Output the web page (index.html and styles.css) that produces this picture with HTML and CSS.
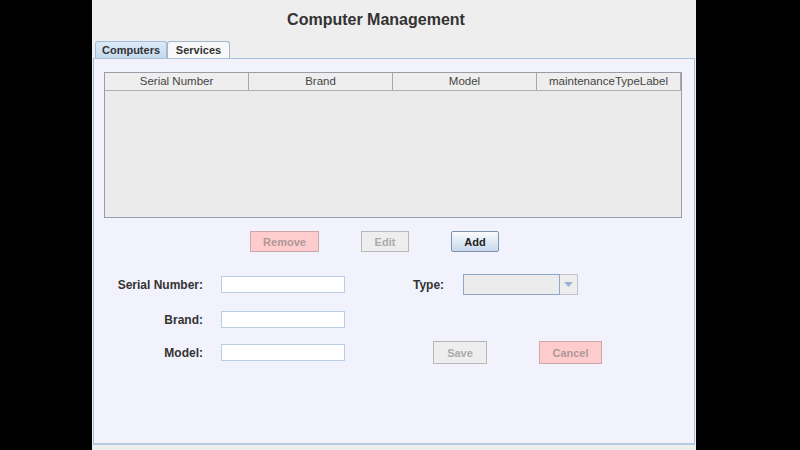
FILE: index.html
```html
<!DOCTYPE html>
<html>
<head>
<meta charset="utf-8">
<link rel="stylesheet" href="styles.css">
</head>
<body>
<div class="window">
  <h1 class="title">Computer Management</h1>
  <div class="tabs">
    <div class="tab tab-active">Computers</div>
    <div class="tab">Services</div>
  </div>
  <div class="panel">
    <div class="table">
      <div class="thead">
        <div class="th">Serial Number</div>
        <div class="th">Brand</div>
        <div class="th">Model</div>
        <div class="th">maintenanceTypeLabel</div>
      </div>
    </div>
    <div class="actions">
      <button class="btn btn-red btn-remove">Remove</button>
      <button class="btn btn-grey btn-edit">Edit</button>
      <button class="btn btn-blue btn-add">Add</button>
    </div>
    <div class="form">
      <div class="row row1">
        <label class="lbl">Serial Number:</label>
        <div class="field"></div>
        <label class="lbl lbl-type">Type:</label>
        <div class="combo"><div class="combo-val"></div><div class="combo-arrow"><svg width="9" height="5" viewBox="0 0 9 5"><path d="M0 0 H9 L4.5 5 Z" fill="#9bb3d3"/></svg></div></div>
      </div>
      <div class="row row2">
        <label class="lbl">Brand:</label>
        <div class="field"></div>
      </div>
      <div class="row row3">
        <label class="lbl">Model:</label>
        <div class="field"></div>
        <button class="btn btn-grey btn-save">Save</button>
        <button class="btn btn-red btn-cancel">Cancel</button>
      </div>
    </div>
  </div>
</div>
</body>
</html>
```
FILE: styles.css
```css
html, body {
  margin: 0;
  padding: 0;
  background: #000;
  width: 800px;
  height: 450px;
  overflow: hidden;
  font-family: "Liberation Sans", Arial, sans-serif;
}
.window {
  margin-left: 92px;
  width: 604px;
  height: 450px;
  background: #eeeeee;
  display: flex;
  flex-direction: column;
}
.title {
  margin: 0;
  height: 41px;
  padding: 10px 36px 0 0;
  box-sizing: border-box;
  text-align: center;
  font-size: 16px;
  font-weight: bold;
  color: #333;
  line-height: 19px;
}
.tabs {
  display: flex;
  padding-left: 3px;
  height: 17px;
}
.tab {
  box-sizing: border-box;
  height: 17px;
  padding: 0;
  border: 1px solid #a3b8cc;
  border-bottom: none;
  border-radius: 3px 3px 0 0;
  background: #f8f8f8;
  font-size: 11px;
  font-weight: bold;
  color: #333;
  line-height: 16px;
  width: 63px;
  text-align: center;
}
.tab-active {
  width: 72px;
  background: linear-gradient(#ddeaf7, #c4d9ee);
  border-color: #a3bbd6;
}
.panel {
  box-sizing: border-box;
  margin-left: 1px;
  width: 602px;
  height: 387px;
  border: 1px solid #a8c0db;
  border-bottom: 2px solid #b4c8de;
  background: #f2f2fc;
  padding: 13px 13px 0 10px;
}
.table {
  box-sizing: border-box;
  width: 578px;
  height: 146px;
  border: 1px solid #9a9ca6;
  background: #ebebeb;
}
.thead {
  display: flex;
  height: 17px;
  border-bottom: 1px solid #b0b0b0;
  background: #eeeeee;
}
.th {
  box-sizing: border-box;
  width: 144px;
  border-right: 1px solid #a8a8a8;
  font-size: 11.5px;
  color: #444;
  text-align: center;
  line-height: 17px;
}
.actions {
  display: flex;
  height: 21px;
  margin-top: 13px;
}
.btn {
  box-sizing: border-box;
  height: 21px;
  padding: 0;
  font-family: "Liberation Sans", Arial, sans-serif;
  font-size: 11px;
  font-weight: bold;
  border-radius: 0;
  border: 1px solid #b8b8b8;
}
.btn-red {
  background: #fecccc;
  border-color: #c9a9a9;
  color: #b09898;
}
.btn-grey {
  background: #eeeeee;
  border-color: #b8b8b8;
  color: #aaaaaa;
}
.btn-blue {
  background: linear-gradient(#fbfcfe, #dbe6f3 60%, #c9d9ec);
  border-color: #7e93ae;
  color: #222;
  border-radius: 2px;
}
.btn-remove { margin-left: 146px; width: 69px; }
.btn-edit { margin-left: 42px; width: 48px; }
.btn-add { margin-left: 42px; width: 48px; }
.form {
  display: flex;
  flex-direction: column;
  margin-top: 22px;
}
.row {
  display: flex;
  align-items: center;
}
.row1 { height: 21px; }
.row2 { height: 17px; margin-top: 16px; }
.row3 { height: 23px; margin-top: 13px; }
.lbl {
  box-sizing: border-box;
  width: 99px;
  text-align: right;
  font-size: 12px;
  font-weight: bold;
  color: #333;
}
.field {
  box-sizing: border-box;
  margin-left: 18px;
  width: 124px;
  height: 17px;
  background: #fff;
  border: 1px solid #b8cfe6;
}
.lbl-type {
  margin-left: 68px;
  width: 31px;
  text-align: left;
}
.combo {
  box-sizing: border-box;
  margin-left: 19px;
  width: 115px;
  height: 21px;
  display: flex;
  border: 1px solid #c0c4cc;
  background: #eeeeee;
}
.combo-val {
  flex: 1;
  border: 1px solid #8fa7c6;
  margin: -1px 0 -1px -1px;
  background: #ececec;
}
.combo-arrow {
  width: 17px;
  display: flex;
  align-items: center;
  justify-content: center;
  background: #eeeeee;
}
.btn-save {
  height: 23px;
  margin-left: 88px;
  width: 54px;
}
.btn-cancel {
  height: 23px;
  margin-left: 52px;
  width: 63px;
}
```
